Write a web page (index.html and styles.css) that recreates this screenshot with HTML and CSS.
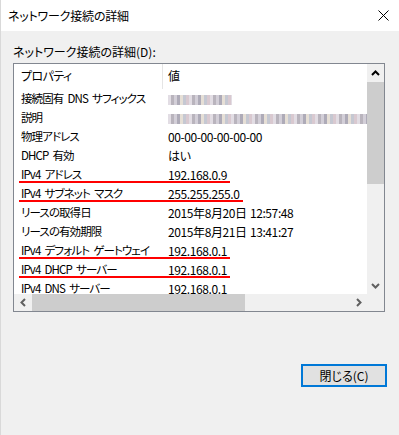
FILE: index.html
```html
<!DOCTYPE html>
<html lang="ja">
<head>
<meta charset="utf-8">
<title>ネットワーク接続の詳細</title>
<link rel="stylesheet" href="styles.css">
</head>
<body>
<div class="window">
  <div class="titlebar">
    <span class="title">ネットワーク接続の詳細</span>
    <svg class="close" width="11" height="11" viewBox="0 0 11 11"><path d="M0.5 0.5 L10.5 10.5 M10.5 0.5 L0.5 10.5" stroke="#000" stroke-width="1" fill="none"/></svg>
  </div>
  <div class="content">
    <div class="label">ネットワーク接続の詳細(D):</div>
    <div class="listbox">
      <div class="view">
        <div class="head">
          <div class="hcell">プロパティ</div>
          <div class="hcell">値</div>
        </div>
        <div class="row"><div class="key">接続固有 DNS サフィックス</div><div class="val"><span class="blur blur-short"></span></div></div>
        <div class="row"><div class="key">説明</div><div class="val"><span class="blur blur-long"></span></div></div>
        <div class="row"><div class="key">物理アドレス</div><div class="val">00-00-00-00-00-00</div></div>
        <div class="row"><div class="key">DHCP 有効</div><div class="val">はい</div></div>
        <div class="row mark"><div class="key">IPv4 アドレス</div><div class="val">192.168.0.9</div></div>
        <div class="row mark mark-wide"><div class="key">IPv4 サブネット マスク</div><div class="val">255.255.255.0</div></div>
        <div class="row"><div class="key">リースの取得日</div><div class="val">2015年8月20日 12:57:48</div></div>
        <div class="row"><div class="key">リースの有効期限</div><div class="val">2015年8月21日 13:41:27</div></div>
        <div class="row mark"><div class="key">IPv4 デフォルト ゲートウェイ</div><div class="val">192.168.0.1</div></div>
        <div class="row mark"><div class="key">IPv4 DHCP サーバー</div><div class="val">192.168.0.1</div></div>
        <div class="row"><div class="key">IPv4 DNS サーバー</div><div class="val">192.168.0.1</div></div>
      </div>
      <div class="vscroll">
        <div class="arrow"><svg width="9" height="6" viewBox="0 0 9 6"><path d="M1 5 L4.5 1.5 L8 5" stroke="#000" stroke-width="2" fill="none"/></svg></div>
        <div class="vthumb"></div>
        <div class="vtrack"></div>
        <div class="arrow"><svg width="9" height="6" viewBox="0 0 9 6"><path d="M1 1 L4.5 4.5 L8 1" stroke="#606060" stroke-width="2" fill="none"/></svg></div>
      </div>
      <div class="hscroll">
        <div class="arrow"><svg width="6" height="9" viewBox="0 0 6 9"><path d="M5 1 L1.5 4.5 L5 8" stroke="#606060" stroke-width="2" fill="none"/></svg></div>
        <div class="hthumb"></div>
        <div class="htrack"></div>
        <div class="arrow"><svg width="6" height="9" viewBox="0 0 6 9"><path d="M1 1 L4.5 4.5 L1 8" stroke="#606060" stroke-width="2" fill="none"/></svg></div>
      </div>
      <div class="corner"></div>
    </div>
    <div class="footer">
      <button class="btn">閉じる(C)</button>
    </div>
  </div>
</div>
</body>
</html>
```
FILE: styles.css
```css
* { box-sizing: border-box; }
html, body { margin: 0; padding: 0; }
body {
  font-family: "Noto Sans CJK JP", "Noto Sans", sans-serif;
  font-size: 12px;
  font-feature-settings: "palt";
  color: #000;
  background: #f0f0f0;
}
.window {
  width: 399px;
  height: 435px;
  background: #f0f0f0;
  border-left: 1px solid #d9d9d9;
  display: flex;
  flex-direction: column;
}
.titlebar {
  height: 31px;
  background: #fff;
  display: flex;
  align-items: center;
  justify-content: space-between;
  padding: 0 10px 0 7px;
}
.title { line-height: 16px; letter-spacing: -0.2px; }
.close { display: block; }
.content {
  display: flex;
  flex-direction: column;
  padding: 13px 0 0 12px;
}
.label { line-height: 16px; }
.listbox {
  margin-top: 3px;
  width: 372px;
  height: 249px;
  border: 1px solid #828790;
  background: #fff;
  display: grid;
  grid-template-columns: 1fr 17px;
  grid-template-rows: 1fr 17px;
  overflow: hidden;
}
.view {
  overflow: hidden;
  display: flex;
  flex-direction: column;
}
.head {
  display: grid;
  grid-template-columns: 149px 1fr;
  height: 25px;
  flex: none;
}
.hcell {
  line-height: 24px;
  padding-left: 7px;
  letter-spacing: -0.6px;
}
.hcell:first-child { border-right: 1px solid #e5e5e5; }
.hcell + .hcell { padding-left: 5px; }
.row {
  position: relative;
  display: grid;
  grid-template-columns: 149px 1fr;
  height: 19px;
  flex: none;
  line-height: 19px;
  white-space: nowrap;
}
.key {
  padding-left: 7px;
  font-size: 11.5px;
  letter-spacing: -0.9px;
  word-spacing: 2.5px;
  overflow: hidden;
}
.val { padding-left: 5px; overflow: hidden; letter-spacing: -0.4px; word-spacing: 1px; }
.mark::after {
  content: "";
  position: absolute;
  left: 5px;
  bottom: 1px;
  width: 211px;
  height: 2px;
  background: #f00;
}
.mark-wide::after { width: 224px; }
.blur {
  display: inline-block;
  height: 10px;
  vertical-align: -1px;
  background:
    repeating-linear-gradient(90deg, #e2dde4 0 3px, #b9b4bd 3px 6px, #d3cfd8 6px 9px, #aeabb8 9px 12px, #e6dfd6 12px 15px, #c5c8d2 15px 18px, #d9c9d0 18px 21px);
}
.blur-short { width: 64px; }
.blur-long { width: 205px; }
.vscroll {
  background: #f0f0f0;
  display: flex;
  flex-direction: column;
}
.arrow {
  flex: none;
  width: 17px;
  height: 17px;
  display: flex;
  align-items: center;
  justify-content: center;
}
.arrow svg { display: block; }
.vthumb {
  flex: none;
  height: 102px;
  margin-top: 1px;
  background: #cdcdcd;
}
.vtrack { flex: 1; }
.hscroll {
  background: #f0f0f0;
  display: flex;
}
.hthumb {
  flex: none;
  width: 213px;
  margin-left: 1px;
  background: #cdcdcd;
}
.htrack { flex: 1; }
.corner { background: #f0f0f0; }
.footer {
  display: flex;
  justify-content: flex-end;
  padding-right: 12px;
  margin-top: 52px;
}
.btn {
  width: 86px;
  height: 23px;
  border: 2px solid #0078d7;
  background: #e1e1e1;
  font-family: inherit;
  font-size: 12px;
  font-feature-settings: "palt";
  color: #000;
  padding: 0;
  line-height: 18px;
}
```
